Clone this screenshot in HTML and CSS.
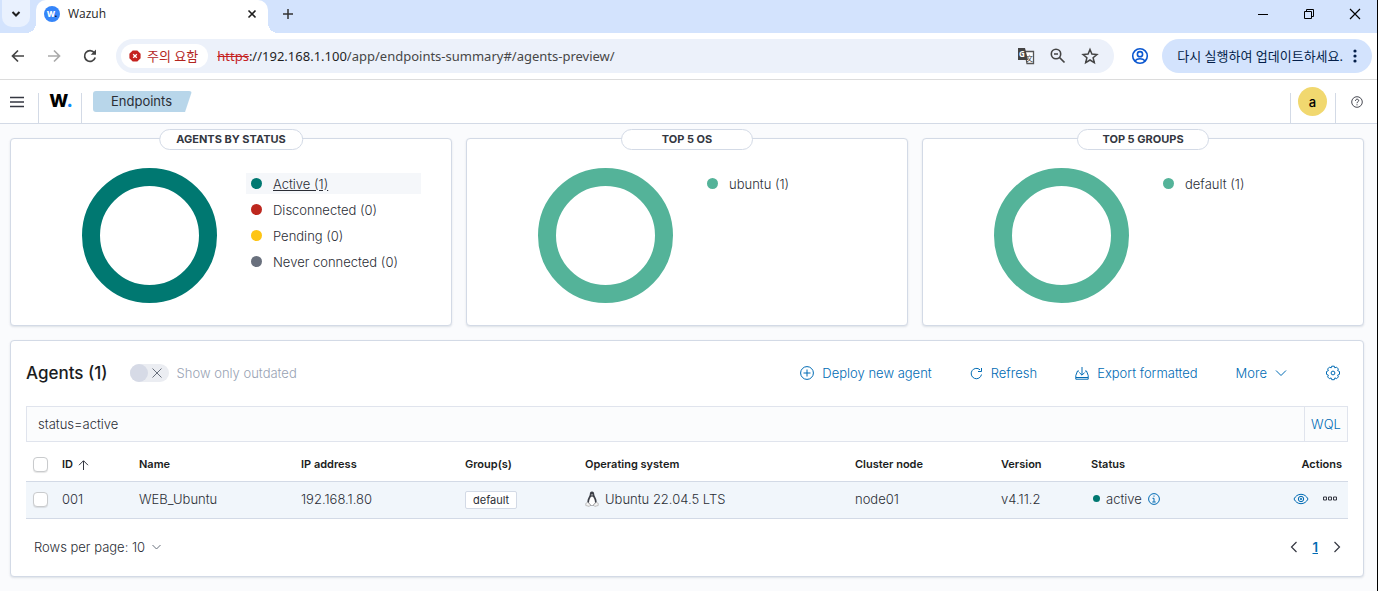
FILE: index.html
```html
<!DOCTYPE html>
<html lang="ko">
<head>
    <meta charset="UTF-8">
    <meta name="viewport" content="width=device-width, initial-scale=1.0">
    <title>Wazuh</title>
    <link rel="stylesheet" href="styles.css">
</head>
<body>
    <!-- Browser tabs -->
    <div class="tab-strip">
        <button type="button" class="tab-search" aria-label="Search tabs">
            <svg width="10" height="10" viewBox="0 0 10 10"><path d="M1.5 3l3.5 3.500 3.500-3.500" fill="none" stroke="#1f1f1f" stroke-width="2"/></svg>
        </button>
        <div class="tab">
            <span class="favicon">W<i>.</i></span>
            <span class="tab-title">Wazuh</span>
            <button type="button" class="icon-button" aria-label="Close tab">
                <svg width="10" height="10" viewBox="0 0 10 10"><path d="M1.500 1.500l7 7M8.500 1.500l-7 7" stroke="#1f1f1f" stroke-width="1.600"/></svg>
            </button>
        </div>
        <button type="button" class="icon-button new-tab" aria-label="New tab">
            <svg width="12" height="12" viewBox="0 0 12 12"><path d="M6 1v10M1 6h10" stroke="#333" stroke-width="1.500"/></svg>
        </button>
        <div class="window-controls">
            <button type="button" class="icon-button" aria-label="Minimize">
                <svg width="12" height="12" viewBox="0 0 12 12"><path d="M1 6.500h10" stroke="#000"/></svg>
            </button>
            <button type="button" class="icon-button" aria-label="Restore">
                <svg width="12" height="12" viewBox="0 0 12 12"><path d="M1.500 3.500h7v7h-7zM3.500 3.500v-2h7v7h-2" fill="none" stroke="#000"/></svg>
            </button>
            <button type="button" class="icon-button" aria-label="Close">
                <svg width="12" height="12" viewBox="0 0 12 12"><path d="M1 1l10 10M11 1L1 11" stroke="#000" stroke-width="1.200"/></svg>
            </button>
        </div>
    </div>

    <!-- Address bar -->
    <div class="toolbar">
        <div class="nav-buttons">
            <button type="button" class="icon-button" aria-label="Back">
                <svg width="16" height="16" viewBox="0 0 16 16"><path d="M14 8H3M8 2.500L2.500 8 8 13.500" fill="none" stroke="#444" stroke-width="1.700"/></svg>
            </button>
            <button type="button" class="icon-button" aria-label="Forward">
                <svg width="16" height="16" viewBox="0 0 16 16"><path d="M2 8h11M8 2.500L13.500 8 8 13.500" fill="none" stroke="#aaa" stroke-width="1.700"/></svg>
            </button>
            <button type="button" class="icon-button" aria-label="Reload">
                <svg width="16" height="16" viewBox="0 0 16 16"><path d="M13.200 9.500A5.400 5.400 0 1 1 12.300 4.700" fill="none" stroke="#444" stroke-width="1.700"/><path d="M14 1.500v5.300H8.700z" fill="#444"/></svg>
            </button>
        </div>
        <div class="omnibox">
            <button type="button" class="warning-chip">
                <svg width="12" height="12" viewBox="0 0 12 12"><path d="M3.700.4h4.600l3.300 3.300v4.600l-3.300 3.300H3.700L.4 8.300V3.700z" fill="#c5221f"/><path d="M4.200 4.200l3.600 3.600M7.800 4.200L4.200 7.800" stroke="#fff" stroke-width="1.300"/></svg>
                주의 요함
            </button>
            <label class="url" for="url-path"><s>https</s>://192.168.1.100</label>
            <input type="text" id="url-path" class="url-path" value="/app/endpoints-summary#/agents-preview/">
            <div class="omnibox-actions">
                <button type="button" class="icon-button" aria-label="Translate">
                    <svg width="18" height="18" viewBox="0 0 18 18">
                        <path d="M8 4.500h8.500v12H10z" fill="#fff" stroke="#555" stroke-width="1.300"/>
                        <path d="M1 1h7l3 12H1z" fill="#444"/>
                        <text x="2" y="10" font-size="8" font-weight="700" fill="#fff">G</text>
                        <text x="9" y="14" font-size="7" fill="#444">文</text>
                    </svg>
                </button>
                <button type="button" class="icon-button" aria-label="Zoom">
                    <svg width="18" height="18" viewBox="0 0 18 18"><circle cx="7" cy="7" r="4.700" fill="none" stroke="#444" stroke-width="1.600"/><path d="M10.500 10.500l5 5M5 7h4" stroke="#444" stroke-width="1.700"/></svg>
                </button>
                <button type="button" class="icon-button" aria-label="Bookmark">
                    <svg width="18" height="18" viewBox="0 0 18 18"><path d="M9 2.500l1.900 4.600 5 .4-3.800 3.200 1.200 4.900L9 13l-4.300 2.600 1.200-4.900-3.800-3.200 5-.4z" fill="none" stroke="#444" stroke-width="1.500"/></svg>
                </button>
            </div>
        </div>
        <button type="button" class="icon-button" aria-label="Profile">
            <svg width="18" height="18" viewBox="0 0 18 18" fill="none" stroke="#0b57d0" stroke-width="1.600"><circle cx="9" cy="9" r="7.300"/><circle cx="9" cy="7.200" r="2.600"/><path d="M3.800 14c1.500-1.600 3.200-2.200 5.200-2.200s3.700.6 5.200 2.200"/></svg>
        </button>
        <button type="button" class="update-button">
            다시 실행하여 업데이트하세요.
            <svg width="4" height="14" viewBox="0 0 4 14" fill="#041e49"><circle cx="2" cy="2" r="1.600"/><circle cx="2" cy="7" r="1.600"/><circle cx="2" cy="12" r="1.600"/></svg>
        </button>
    </div>

    <!-- App header -->
    <header class="app-header">
        <button type="button" class="icon-button menu-button" aria-label="Menu">
            <svg width="16" height="12" viewBox="0 0 16 12"><path d="M1 1.500h14M1 6h14M1 10.500h14" stroke="#343741" stroke-width="1.400"/></svg>
        </button>
        <a href="#" class="logo">W<i>.</i></a>
        <a href="#" class="breadcrumb">Endpoints</a>
        <div class="header-right">
            <button type="button" class="avatar">a</button>
        </div>
        <button type="button" class="icon-button help-button" aria-label="Help">
            <svg width="12" height="12" viewBox="0 0 12 12" fill="none" stroke="#343741"><circle cx="6" cy="6" r="5.300" stroke-width=".9"/><path d="M4.500 4.800c0-2.200 3.200-2 3.200-.2C7.700 5.800 6 5.700 6 7.200M6 8.300v1"/></svg>
        </button>
    </header>

    <main class="content">
        <div class="cards">
            <section class="card">
                <h2 class="card-title">Agents by status</h2>
                <svg class="donut" width="135" height="135" viewBox="0 0 135 135"><circle cx="67.500" cy="67.500" r="58.500" fill="none" stroke="#007871" stroke-width="18"/></svg>
                <ul class="legend">
                    <li class="selected"><span class="dot teal"></span><a href="#">Active (1)</a></li>
                    <li><span class="dot red"></span><a href="#">Disconnected (0)</a></li>
                    <li><span class="dot yellow"></span><a href="#">Pending (0)</a></li>
                    <li><span class="dot gray"></span><a href="#">Never connected (0)</a></li>
                </ul>
            </section>
            <section class="card">
                <h2 class="card-title">Top 5 OS</h2>
                <svg class="donut" width="135" height="135" viewBox="0 0 135 135"><circle cx="67.500" cy="67.500" r="58.500" fill="none" stroke="#54b399" stroke-width="18"/></svg>
                <ul class="legend">
                    <li><span class="dot green"></span><a href="#">ubuntu (1)</a></li>
                </ul>
            </section>
            <section class="card">
                <h2 class="card-title">Top 5 groups</h2>
                <svg class="donut" width="135" height="135" viewBox="0 0 135 135"><circle cx="67.500" cy="67.500" r="58.500" fill="none" stroke="#54b399" stroke-width="18"/></svg>
                <ul class="legend">
                    <li><span class="dot green"></span><a href="#">default (1)</a></li>
                </ul>
            </section>
        </div>

        <section class="agents">
            <div class="agents-header">
                <h1>Agents (1)</h1>
                <label class="switch">
                    <input type="checkbox" disabled>
                    <span class="switch-body">
                        <svg width="10" height="10" viewBox="0 0 10 10"><path d="M.5.5l9 9M9.500.5l-9 9" stroke="#69707d"/></svg>
                    </span>
                    Show only outdated
                </label>
                <div class="agents-actions">
                    <button type="button" class="link-button">
                        <svg width="14" height="14" viewBox="0 0 14 14" fill="none" stroke="#006bb4"><circle cx="7" cy="7" r="6.400"/><path d="M7 3.500v7M3.500 7h7"/></svg>
                        Deploy new agent
                    </button>
                    <button type="button" class="link-button">
                        <svg width="13" height="13" viewBox="0 0 13 13" fill="none" stroke="#006bb4"><path d="M11.500 7.500A5.200 5.200 0 1 1 10 2.800M8 4.500h3.500V1"/></svg>
                        Refresh
                    </button>
                    <button type="button" class="link-button">
                        <svg width="14" height="14" viewBox="0 0 14 14" fill="none" stroke="#006bb4"><path d="M4 5H2.500L.8 9.500v3.700h12.400V9.500L11.500 5H10M7 1v8M4.300 6.500L7 9.200l2.700-2.700M1 11.500h12"/></svg>
                        Export formatted
                    </button>
                    <button type="button" class="link-button">
                        More
                        <svg width="12" height="8" viewBox="0 0 12 8" fill="none" stroke="#006bb4"><path d="M1 1.500l5 5 5-5"/></svg>
                    </button>
                    <button type="button" class="icon-button" aria-label="Columns">
                        <svg width="16" height="16" viewBox="0 0 16 16" fill="none" stroke="#006bb4"><circle cx="8" cy="8" r="1.900"/><path d="M6.700 1.200h2.600l.5 1.700 1.700-.8 1.900 1.900-.8 1.600 1.900.9v2.800l-1.900.9.800 1.700-1.800 1.800-1.700-.8-.6 1.800H6.700l-.6-1.800-1.700.8-1.800-1.800.8-1.700-1.900-.9V6.500l1.900-.9-.8-1.600 1.900-1.900 1.700.8z"/></svg>
                    </button>
                </div>
            </div>

            <div class="search-bar">
                <input type="text" value="status=active" aria-label="Search">
                <button type="button">WQL</button>
            </div>

            <table class="agents-table">
                <thead>
                    <tr>
                        <th class="col-check"><input type="checkbox" aria-label="Select all"></th>
                        <th class="col-id">ID <svg width="11" height="10" viewBox="0 0 11 10" fill="none" stroke="#343741"><path d="M5.500 10V1M1 5.200L5.500.7 10 5.200"/></svg></th>
                        <th class="col-name">Name</th>
                        <th class="col-ip">IP address</th>
                        <th class="col-group">Group(s)</th>
                        <th class="col-os">Operating system</th>
                        <th class="col-cluster">Cluster node</th>
                        <th class="col-version">Version</th>
                        <th>Status</th>
                        <th class="col-actions">Actions</th>
                    </tr>
                </thead>
                <tbody>
                    <tr>
                        <td class="col-check"><input type="checkbox" aria-label="Select agent 001"></td>
                        <td>001</td>
                        <td>WEB_Ubuntu</td>
                        <td>192.168.1.80</td>
                        <td><span class="badge">default</span></td>
                        <td>
                            <div class="cell">
                                <svg width="14" height="16" viewBox="0 0 14 16">
                                    <path d="M7 .5c1.600 0 2.200 1.200 2.200 2.800 0 2 2.500 4.200 2.500 7.700L10 14.500H4L2.300 11c0-3.500 2.500-5.700 2.500-7.700C4.800 1.700 5.400.5 7 .5z" fill="#3c3f47"/>
                                    <path d="M7 5.200C5.300 6.200 3.900 8.700 4 12l2 2.300h2L10 12c.1-3.300-1.300-5.800-3-6.800z" fill="#fff"/>
                                    <path d="M2.800 11.200L.8 12.400v2.100l3.500.9 1.300-1.400zM11.200 11.200l2 1.200v2.100l-3.500.9-1.300-1.400z" fill="#f4f4f4" stroke="#aaa" stroke-width=".7"/>
                                    <path d="M5.700 3.600L7 4.700l1.300-1.100z" fill="#ddd"/>
                                </svg>
                                Ubuntu 22.04.5 LTS
                            </div>
                        </td>
                        <td>node01</td>
                        <td>v4.11.2</td>
                        <td>
                            <div class="cell status">
                                <span class="dot teal"></span>
                                active
                                <svg width="12" height="12" viewBox="0 0 12 12" fill="none" stroke="#006bb4"><circle cx="6" cy="6" r="5.400"/><path d="M6 2.500v1.200M4.500 5.300H6v3.500M4.300 9h3.400"/></svg>
                            </div>
                        </td>
                        <td>
                            <div class="cell row-actions">
                                <button type="button" class="icon-button" aria-label="View">
                                    <svg width="16" height="12" viewBox="0 0 16 12" fill="none" stroke="#006bb4"><path d="M1 6c1.500-3 4-4.700 7-4.700S13.500 3 15 6c-1.500 3-4 4.700-7 4.700S2.500 9 1 6z"/><circle cx="8" cy="6" r="2.700"/><circle cx="8" cy="6" r=".8"/></svg>
                                </button>
                                <button type="button" class="icon-button" aria-label="More actions">
                                    <svg width="15" height="5" viewBox="0 0 15 5" fill="none" stroke="#343741"><path d="M.5 1h3v3h-3zM5.500 1h3v3h-3zM10.500 1h3v3h-3z"/></svg>
                                </button>
                            </div>
                        </td>
                    </tr>
                </tbody>
            </table>

            <div class="table-footer">
                <button type="button" class="rows-button">
                    Rows per page: 10
                    <svg width="9" height="6" viewBox="0 0 9 6" fill="none" stroke="#69707d"><path d="M.5 1l4 4 4-4"/></svg>
                </button>
                <div class="pagination">
                    <button type="button" class="icon-button" aria-label="Previous page">
                        <svg width="8" height="12" viewBox="0 0 8 12" fill="none" stroke="#343741" stroke-width="1.200"><path d="M6.500 1l-5 5 5 5"/></svg>
                    </button>
                    <a href="#" class="page">1</a>
                    <button type="button" class="icon-button" aria-label="Next page">
                        <svg width="8" height="12" viewBox="0 0 8 12" fill="none" stroke="#343741" stroke-width="1.200"><path d="M1.500 1l5 5-5 5"/></svg>
                    </button>
                </div>
            </div>
        </section>
    </main>
</body>
</html>
```
FILE: styles.css
```css
* {
    box-sizing: border-box;
}

body {
    margin: 0;
    min-height: 100vh;
    border-right: 1px solid #000;
    background-color: #fafbfd;
    color: #2b2e36;
    font-family: Inter, "Noto Sans CJK KR", sans-serif;
    font-size: 13px;
    font-weight: 300;
    line-height: 20px;
}

button,
input {
    margin: 0;
    padding: 0;
    border: none;
    background: none;
    color: inherit;
    font: inherit;
}

button {
    cursor: pointer;
}

a {
    color: inherit;
    text-decoration: none;
}

svg {
    display: block;
    flex: none;
}

.icon-button {
    display: flex;
    align-items: center;
    justify-content: center;
    flex: none;
}

/* Browser tabs */
.tab-strip {
    display: flex;
    align-items: center;
    height: 33px;
    padding-left: 2px;
    background-color: #d3e3fd;
    font-family: "Open Sans", "Noto Sans CJK KR", sans-serif;
    font-size: 12px;
    font-weight: 400;
}

.tab-search {
    display: flex;
    align-items: center;
    justify-content: center;
    align-self: flex-start;
    width: 28px;
    height: 27px;
    border-radius: 0 0 10px 10px;
    background-color: #e9f1fe;
}

.tab {
    position: relative;
    display: flex;
    align-items: center;
    width: 232px;
    height: 33px;
    margin-left: 6px;
    padding: 0 11px 6px 8px;
    border-radius: 10px 10px 0 0;
    background-color: #fff;
    color: #1f1f1f;
}

/* Curved feet of the active tab */
.tab::before,
.tab::after {
    content: "";
    position: absolute;
    bottom: 0;
    width: 10px;
    height: 10px;
}

.tab::before {
    right: 100%;
    background: radial-gradient(circle at 0 0, transparent 10px, #fff 10px);
}

.tab::after {
    left: 100%;
    background: radial-gradient(circle at 100% 0, transparent 10px, #fff 10px);
}

.favicon {
    width: 16px;
    height: 16px;
    border-radius: 50%;
    background-color: #3585f9;
    color: #fff;
    font: 800 8px/16px Inter, sans-serif;
    text-align: center;
}

.favicon i {
    color: #000;
    font-style: normal;
}

.tab-title {
    flex: 1;
    margin-left: 8px;
}

.new-tab {
    padding: 0 14px 6px;
}

.window-controls {
    display: flex;
    gap: 34px;
    margin-left: auto;
    padding: 0 16px 6px 0;
}

/* Address bar */
.toolbar {
    display: flex;
    align-items: center;
    height: 47px;
    padding: 0 5px 0 10px;
    border-bottom: 1px solid #dcdcdc;
    background-color: #fff;
    font-family: "Noto Sans", "Noto Sans CJK KR", sans-serif;
    font-weight: 400;
}

.nav-buttons {
    display: flex;
    gap: 20px;
}

.omnibox {
    display: flex;
    align-items: center;
    flex: 1;
    height: 34px;
    margin: 0 17px 0 18px;
    padding: 0 15px 0 5px;
    border-radius: 17px;
    background-color: #ecf1fa;
}

.warning-chip {
    display: flex;
    align-items: center;
    gap: 6px;
    height: 24px;
    margin-right: 9px;
    padding: 0 10px 0 8px;
    border-radius: 12px;
    background-color: #fff;
    color: #b3261e;
}

.url {
    color: #1f1f1f;
}

.url s {
    color: #c5221f;
}

.url-path {
    flex: 1;
    min-width: 0;
    color: #474747;
}

.omnibox-actions {
    display: flex;
    gap: 14px;
}

.update-button {
    display: flex;
    align-items: center;
    gap: 10px;
    height: 34px;
    margin-left: 13px;
    padding: 0 15px;
    border-radius: 17px;
    background-color: #d3e3fd;
    color: #041e49;
}

/* App header */
.app-header {
    display: flex;
    align-items: flex-end;
    height: 44px;
    border-bottom: 1px solid #d3dae6;
    background-color: #fff;
}

.menu-button {
    width: 38px;
    height: 43px;
    padding-right: 4px;
}

.logo {
    width: 44px;
    height: 30px;
    padding-left: 2px;
    border: solid #d3dae6;
    border-width: 0 1px;
    color: #000;
    font-size: 18px;
    font-weight: 800;
    line-height: 16px;
    text-align: center;
}

.logo i {
    color: #0c8dff;
    font-style: normal;
}

.breadcrumb {
    height: 21px;
    margin: 0 auto 11px 11px;
    padding: 0 20px 0 18px;
    border-radius: 3px;
    background-color: #b8d6ea;
    clip-path: polygon(0 0, 100% 0, calc(100% - 7px) 100%, 0 100%);
    font-weight: 400;
}

.header-right {
    display: flex;
    align-items: flex-start;
    height: 30px;
    padding: 0 8px 0 7px;
    border: solid #d3dae6;
    border-width: 0 1px;
}

.avatar {
    width: 29px;
    height: 29px;
    margin-top: -6px;
    border-radius: 50%;
    background-color: #f1d86f;
    color: #000;
    font-weight: 500;
}

.help-button {
    width: 41px;
    height: 43px;
}

/* Charts */
.content {
    padding: 14px 13px 14px 10px;
}

.cards {
    display: flex;
    gap: 14px;
}

.card,
.agents {
    border: 1px solid #d3dae6;
    border-radius: 4px;
    background-color: #fff;
    box-shadow: 0 1px 2px rgba(152, 162, 179, 0.3);
}

.card {
    position: relative;
    display: flex;
    flex: 1;
    gap: 29px;
    height: 188px;
    padding: 29px 30px 0 71px;
}

.card-title {
    position: absolute;
    top: -10px;
    left: 50%;
    min-width: 132px;
    margin: 0;
    padding: 0 16px 1px;
    border: 1px solid #d3dae6;
    border-radius: 11px;
    background-color: #fff;
    color: #343741;
    font-size: 11px;
    font-weight: 700;
    line-height: 18px;
    text-align: center;
    text-transform: uppercase;
    white-space: nowrap;
    transform: translateX(-50%);
}

.legend {
    display: flex;
    flex: 1;
    flex-direction: column;
    gap: 5px;
    margin: 5px 0 0;
    padding: 0;
    list-style: none;
}

.legend li {
    display: flex;
    align-items: center;
    gap: 11px;
    height: 21px;
    padding-left: 5px;
}

.legend .selected {
    background-color: #f5f7fa;
}

.selected a {
    text-decoration: underline;
}

.dot {
    width: 11px;
    height: 11px;
    border-radius: 50%;
}

.teal {
    background-color: #007871;
}

.red {
    background-color: #bd271e;
}

.yellow {
    background-color: #fec514;
}

.gray {
    background-color: #69707d;
}

.green {
    background-color: #54b399;
}

/* Agents table */
.agents {
    margin-top: 14px;
    padding: 16px 15px;
}

.agents-header {
    display: flex;
    align-items: center;
    height: 32px;
}

.agents-header h1 {
    margin: 0;
    color: #1a1c21;
    font-size: 17px;
    font-weight: 500;
}

.switch {
    display: flex;
    align-items: center;
    gap: 8px;
    margin-left: 22px;
    color: #98a2b3;
}

.switch input {
    position: absolute;
    opacity: 0;
}

.switch-body {
    display: flex;
    align-items: center;
    gap: 4px;
    width: 39px;
    height: 18px;
    border-radius: 9px;
    background-color: #ebedf2;
}

.switch-body::before {
    content: "";
    width: 18px;
    height: 18px;
    border-radius: 50%;
    background-color: #d6dae6;
}

.agents-actions {
    display: flex;
    align-items: center;
    gap: 38px;
    margin-left: auto;
    padding-right: 7px;
}

.link-button {
    display: flex;
    align-items: center;
    gap: 8px;
    color: #006bb4;
}

.search-bar {
    display: flex;
    height: 36px;
    margin-top: 17px;
    border: 1px solid #e0e4ed;
    background-color: #fbfcfd;
}

.search-bar input {
    flex: 1;
    padding-left: 11px;
}

.search-bar button {
    width: 43px;
    border-left: 1px solid #e0e4ed;
    color: #006bb4;
}

.agents-table {
    width: 100%;
    border-collapse: collapse;
    table-layout: fixed;
}

.agents-table th,
.agents-table td {
    padding: 0 8px;
    border-bottom: 1px solid #d3dae6;
    text-align: left;
    white-space: nowrap;
}

.agents-table th {
    height: 39px;
    padding-top: 5px;
    color: #1a1c21;
    font-size: 11px;
    font-weight: 600;
    line-height: 16px;
}

.agents-table th svg {
    display: inline-block;
    margin-left: 2px;
    vertical-align: -2px;
}

.agents-table td {
    height: 37px;
    padding-bottom: 2px;
    background-color: #f1f6fb;
}

.agents-table .col-check {
    width: 28px;
    padding-left: 7px;
}

.col-id {
    width: 77px;
}

.col-name {
    width: 162px;
}

.col-ip {
    width: 164px;
}

.col-group {
    width: 120px;
}

.col-os {
    width: 270px;
}

.col-cluster {
    width: 146px;
}

.col-version {
    width: 90px;
}

.agents-table .col-actions {
    width: 100px;
    padding-right: 6px;
    text-align: right;
}

.agents-table input {
    display: block;
    width: 15px;
    height: 15px;
    margin-top: 2px;
    border: 1px solid #c9cbcd;
    border-radius: 4px;
    background-color: #fff;
    box-shadow: 0 1px 1px rgba(0, 0, 0, 0.1);
    appearance: none;
}

.badge {
    display: inline-block;
    padding: 0 7px;
    border: 1px solid #d3dae6;
    border-radius: 2px;
    background-color: #fff;
    font-size: 11px;
    font-weight: 400;
    line-height: 16px;
}

.cell {
    display: flex;
    align-items: center;
    gap: 6px;
}

.status .dot {
    width: 7px;
    height: 7px;
    margin-left: 2px;
}

.row-actions {
    justify-content: flex-end;
    gap: 14px;
    padding-right: 2px;
}

.table-footer {
    display: flex;
    align-items: center;
    justify-content: space-between;
    margin-top: 18px;
    padding: 0 7px 3px 8px;
}

.rows-button {
    display: flex;
    align-items: center;
    gap: 7px;
}

.pagination {
    display: flex;
    align-items: center;
    gap: 15px;
}

.page {
    color: #006bb4;
    font-weight: 600;
    text-decoration: underline;
}
```
